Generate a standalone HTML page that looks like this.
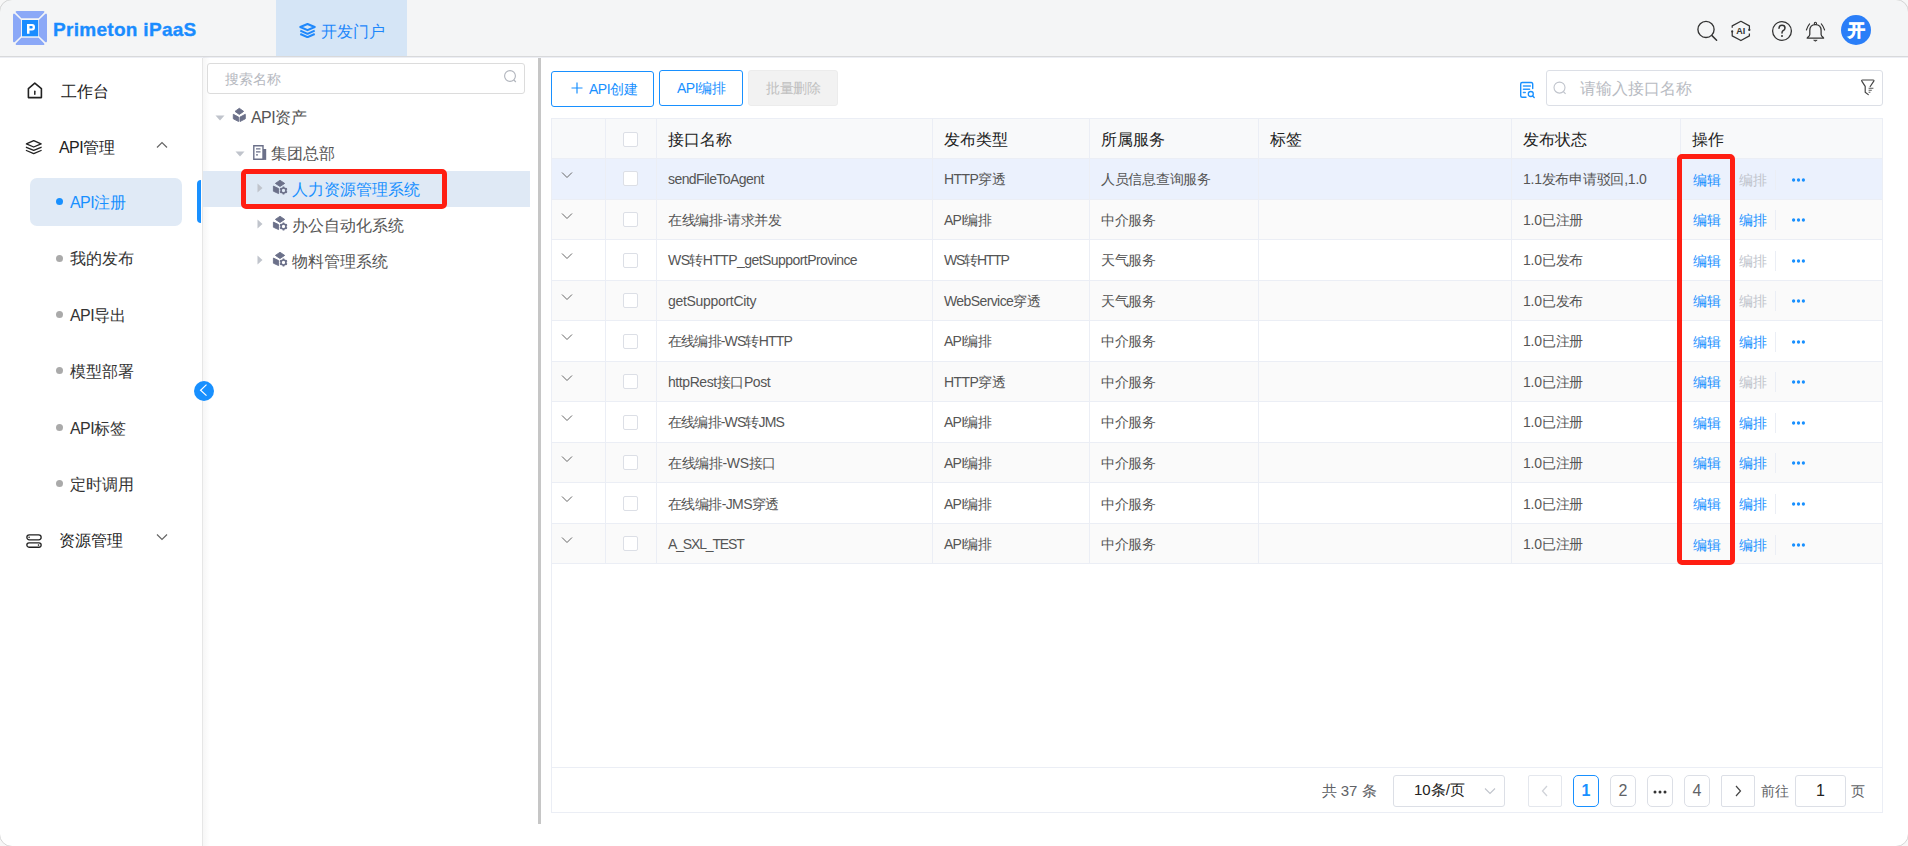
<!DOCTYPE html>
<html><head><meta charset="utf-8">
<style>
*{box-sizing:border-box;margin:0;padding:0}
html,body{width:1908px;height:846px;overflow:hidden;background:#fff;font-family:"Liberation Sans",sans-serif;color:#333}
.abs{position:absolute}
#hdr{position:absolute;left:0;top:0;width:1908px;height:57px;background:#f4f5f6;border-bottom:1px solid #d8d9db}
#logo{left:13px;top:11px;width:34px;height:34px}
#brand{left:53px;top:19px;font-size:19px;line-height:22px;font-weight:bold;color:#1a8cff;white-space:nowrap;letter-spacing:0.3px;-webkit-text-stroke:0.35px #1a8cff}
#tab{left:276px;top:0;width:131px;height:56px;background:#d5e5f6}
#tabtxt{left:321px;top:21.5px;font-size:16px;color:#1f88fb;white-space:nowrap}
#side{left:0;top:57px;width:203px;height:789px;background:#fff;border-right:1px solid #e6e6e6}
.mi{position:absolute;font-size:16px;color:#222;white-space:nowrap}
.si{position:absolute;font-size:16px;color:#333;white-space:nowrap}
.dot{position:absolute;width:7px;height:7px;border-radius:50%;background:#aaa}
#tree{left:203px;top:57px;width:336px;height:789px;background:#fff}
.tn{position:absolute;font-size:16px;color:#555;white-space:nowrap}
#main{left:540px;top:57px;width:1368px;height:789px;background:#fff}
.btn{position:absolute;height:36px;border:1px solid #1890ff;border-radius:3px;color:#1890ff;font-size:14px;letter-spacing:-0.5px;text-align:center;line-height:34px;background:#fff;white-space:nowrap}
table{border-collapse:collapse}
.row{position:absolute;left:551px;width:1332px}
.cell{position:absolute;top:0;height:100%;font-size:14px;color:#555;white-space:nowrap;display:flex;align-items:center;padding-left:12px}
.vl{position:absolute;width:1px;background:#ebeef5}
.hl{position:absolute;height:1px;background:#ebeef5}
.cb{position:absolute;width:15px;height:15px;border:1px solid #dcdfe6;border-radius:2px;background:#fff}
.op{position:absolute;font-size:14px;color:#1890ff;white-space:nowrap}
.opd{color:#c0c4cc}
.pg{position:absolute;top:775px;height:32px;border:1px solid #dcdfe6;border-radius:5px;background:#fff;font-size:16px;color:#606266;text-align:center;line-height:30px}
</style></head><body>
<div id="hdr"></div>
<svg class="abs" id="logo" viewBox="0 0 34 34">
  <g fill="#8ba8f7" stroke="#8ba8f7" stroke-width="1.3" stroke-linejoin="round">
    <path d="M3.9 0.65 H30.2 Q31.2 0.65 30.5 1.4 L25.4 6.6 H8.6 L3.5 1.4 Q2.9 0.65 3.9 0.65Z"/>
    <path d="M3.9 33.35 H30.2 Q31.2 33.35 30.5 32.6 L25.4 27.4 H8.6 L3.5 32.6 Q2.9 33.35 3.9 33.35Z"/>
    <path d="M0.65 3.9 V30.1 Q0.65 31.1 1.4 30.4 L7.4 24.8 V9.2 L1.4 3.5 Q0.65 2.9 0.65 3.9Z"/>
    <path d="M33.35 3.9 V30.1 Q33.35 31.1 32.6 30.4 L26.6 24.8 V9.2 L32.6 3.5 Q33.35 2.9 33.35 3.9Z"/>
  </g>
  <rect x="9" y="9" width="16.2" height="16.3" fill="#1a8cff"/>
  <path fill-rule="evenodd" fill="#fff" d="M14 13 H19.2 Q22 13 22 16.2 Q22 19.5 19.2 19.5 H16.5 V22.7 H14Z M16.5 14.9 H18.8 Q19.7 14.9 19.7 16.2 Q19.7 17.6 18.8 17.6 H16.5Z"/>
</svg>
<div class="abs" id="brand">Primeton iPaaS</div>
<div class="abs" id="tab"></div>
<svg class="abs" style="left:299px;top:22.5px" width="17" height="15" viewBox="0 0 17 15">
  <path d="M1.3 4 L8.5 1 L15.7 4 L8.5 7.2Z" fill="none" stroke="#1f88fb" stroke-width="2" stroke-linejoin="round"/>
  <path d="M1.3 7.6 L8.5 10.8 L15.7 7.6" fill="none" stroke="#1f88fb" stroke-width="2" stroke-linejoin="round"/>
  <path d="M1.3 11 L8.5 14.2 L15.7 11" fill="none" stroke="#1f88fb" stroke-width="2" stroke-linejoin="round"/>
</svg>
<div class="abs" id="tabtxt">开发门户</div>

<!-- header icons -->
<svg class="abs" style="left:1694px;top:17px" width="26" height="26" viewBox="0 0 26 26">
  <circle cx="12" cy="12.4" r="8.1" fill="none" stroke="#333" stroke-width="1.35"/>
  <path d="M18 18.6 L22.6 23.2" stroke="#333" stroke-width="1.5" stroke-linecap="round"/>
</svg>
<svg class="abs" style="left:1729px;top:19px" width="24" height="24" viewBox="0 0 24 24">
  <path d="M3.2 8.7 V6.9 L11.9 2.3 L20.4 6.9 V10.8 M20.4 14.4 V16.9 L11.9 21.5 L3.2 16.9 V12.4" fill="none" stroke="#333" stroke-width="1.25" stroke-linejoin="round"/>
  <circle cx="20.3" cy="10.9" r="1.15" fill="#333"/>
  <circle cx="3.2" cy="12.4" r="1.1" fill="#333"/>
  <text x="11.7" y="14.7" font-size="9" font-weight="bold" fill="#333" text-anchor="middle" style="font-family:'Liberation Sans'">AI</text>
</svg>
<svg class="abs" style="left:1770px;top:19px" width="24" height="24" viewBox="0 0 24 24">
  <circle cx="12" cy="12" r="9.4" fill="none" stroke="#333" stroke-width="1.3"/>
  <path d="M9 9.3 Q9 6.3 12 6.3 Q15 6.3 15 9 Q15 10.8 13 11.7 Q12 12.3 12 14" fill="none" stroke="#333" stroke-width="1.5" stroke-linecap="round"/>
  <circle cx="12" cy="16.9" r="1" fill="#333"/>
</svg>
<svg class="abs" style="left:1804px;top:20px" width="24" height="24" viewBox="0 0 24 24">
  <path d="M5.8 14.4 V10.6 Q5.8 4.7 11.4 4.7 Q17.1 4.7 17.1 10.6 V14.4 Q17.1 15.9 19.3 17.6 Q20 18.2 19.2 18.2 H3.6 Q2.8 18.2 3.5 17.6 Q5.8 15.9 5.8 14.4Z" fill="none" stroke="#333" stroke-width="1.25" stroke-linejoin="round"/>
  <circle cx="11.4" cy="3.4" r="1.1" fill="none" stroke="#333" stroke-width="1.1"/>
  <path d="M9.6 20.2 Q11.4 22.2 13.2 20.2Z" fill="#333" stroke="#333" stroke-width="0.6" stroke-linejoin="round"/>
  <path d="M5.6 3.8 Q3.4 6.4 2.4 10 M17.3 3.8 Q19.5 6.4 20.6 10" fill="none" stroke="#333" stroke-width="1.1" stroke-linecap="round"/>
</svg>
<div class="abs" style="left:1841px;top:15px;width:30px;height:30px;border-radius:50%;background:#2a7ef8"></div><div class="abs" style="left:1841px;top:16px;width:30px;height:30px;color:#fff;font-size:17px;font-weight:bold;-webkit-text-stroke:0.7px #fff;text-align:center;line-height:30px">开</div>

<!-- sidebar -->
<div class="abs" id="side"></div>
<div class="abs" style="left:0;top:57px;width:1908px;height:1px;background:#eceef4"></div>
<div class="abs" style="left:203px;top:57px;width:7px;height:789px;background:linear-gradient(to right,rgba(0,0,0,0.035),rgba(0,0,0,0))"></div>
<svg class="abs" style="left:26px;top:82px" width="18" height="18" viewBox="0 0 18 18">
  <path d="M2.4 6.6 L8.8 1.2 L15.4 6.6 V15.6 H2.4Z" fill="none" stroke="#222" stroke-width="1.6" stroke-linejoin="round"/>
  <path d="M8.8 9.2 V12.2" stroke="#222" stroke-width="1.5" stroke-linecap="round"/>
</svg>
<div class="mi" style="left:61px;top:82px">工作台</div>
<svg class="abs" style="left:25px;top:138px" width="18" height="18" viewBox="0 0 18 18">
  <path d="M1.4 5.9 L8.7 2.6 L16.1 5.9 L8.7 9Z" fill="none" stroke="#222" stroke-width="1.35" stroke-linejoin="round"/>
  <path d="M1.4 9.3 L8.7 12.4 L16.1 9.3 M1.4 12.5 L8.7 15.6 L16.1 12.5" fill="none" stroke="#222" stroke-width="1.35" stroke-linejoin="round" stroke-linecap="round"/>
</svg>
<div class="mi" style="left:59px;top:137.5px"><span style="letter-spacing:-0.6px">API</span>管理</div>
<svg class="abs" style="left:156px;top:141px" width="12" height="8" viewBox="0 0 12 8"><path d="M1 6.5 L6 1.5 L11 6.5" fill="none" stroke="#666" stroke-width="1.2"/></svg>
<div class="abs" style="left:30px;top:178px;width:152px;height:48px;border-radius:7px;background:#e0eaf6"></div>
<div class="dot" style="left:55.8px;top:198.3px;background:#1890ff"></div>
<div class="si" style="left:70px;top:193.0px;color:#1890ff"><span style="letter-spacing:-0.6px">API</span>注册</div>
<div class="abs" style="left:197px;top:180px;width:4px;height:43px;background:#1890ff;border-radius:4px 0 0 4px"></div>
<div class="dot" style="left:55.8px;top:254.6px"></div>
<div class="si" style="left:70px;top:249.4px">我的发布</div>
<div class="dot" style="left:55.8px;top:310.9px"></div>
<div class="si" style="left:70px;top:305.8px"><span style="letter-spacing:-0.6px">API</span>导出</div>
<div class="dot" style="left:55.8px;top:367.2px"></div>
<div class="si" style="left:70px;top:362.2px">模型部署</div>
<div class="dot" style="left:55.8px;top:423.5px"></div>
<div class="si" style="left:70px;top:418.6px"><span style="letter-spacing:-0.6px">API</span>标签</div>
<div class="dot" style="left:55.8px;top:479.8px"></div>
<div class="si" style="left:70px;top:475.0px">定时调用</div>
<svg class="abs" style="left:25px;top:532px" width="18" height="18" viewBox="0 0 18 18">
  <rect x="1.85" y="2.85" width="14.3" height="5" rx="2.5" fill="none" stroke="#222" stroke-width="1.3"/>
  <rect x="1.85" y="10.95" width="14.3" height="4.3" rx="2.15" fill="none" stroke="#222" stroke-width="1.3"/>
  <circle cx="4.1" cy="5.35" r="0.8" fill="#222"/><circle cx="13.5" cy="13.1" r="0.8" fill="#222"/>
</svg>
<div class="mi" style="left:58.5px;top:531px">资源管理</div>
<svg class="abs" style="left:156px;top:533px" width="12" height="8" viewBox="0 0 12 8"><path d="M1 1.5 L6 6.5 L11 1.5" fill="none" stroke="#666" stroke-width="1.2"/></svg>
<div class="abs" style="left:194px;top:381px;width:20px;height:20px;border-radius:50%;background:#1890ff"></div>
<svg class="abs" style="left:194px;top:381px" width="20" height="20" viewBox="0 0 20 20"><path d="M12.5 3.6 L6.6 9.2 L12.5 14.6" fill="none" stroke="#fff" stroke-width="1.2"/></svg>

<!-- tree -->
<div class="abs" style="left:207px;top:63px;width:318px;height:31px;border:1px solid #dcdcdc;border-radius:3px;background:#fff"></div>
<div class="abs" style="left:225px;top:71px;font-size:14px;color:#b6b9bf">搜索名称</div>
<svg class="abs" style="left:502px;top:68px" width="16" height="16" viewBox="0 0 16 16"><circle cx="8" cy="8" r="5.4" fill="none" stroke="#b0b4bc" stroke-width="1.1"/><path d="M11.8 11.8 L13.8 14" stroke="#b0b4bc" stroke-width="1.2"/></svg>
<div class="abs" style="left:203px;top:171px;width:327px;height:36px;background:#dfe9f5"></div>
<svg class="abs" style="left:215px;top:115px" width="10" height="6" viewBox="0 0 10 6"><path d="M0.5 0.5 H9.5 L5 5.5Z" fill="#c0c4cc"/></svg>
<svg class="abs" style="left:232px;top:107px" width="16" height="16" viewBox="0 0 16 16"><g fill="#6b7089" stroke="#6b7089" stroke-width="0.9" stroke-linejoin="round"><path d="M3 4.4 L7.3 1.3 L11.7 4.4 L7.3 7.4Z"/><path d="M1.3 7.3 L6.6 10.1 V14.5 L1.3 11.8Z"/><path d="M8 10.1 L13.3 7.3 V11.8 L8 14.5Z"/></g></svg>
<div class="tn" style="left:251px;top:108px"><span style="letter-spacing:-0.6px">API</span>资产</div>
<svg class="abs" style="left:235px;top:151px" width="10" height="6" viewBox="0 0 10 6"><path d="M0.5 0.5 H9.5 L5 5.5Z" fill="#c0c4cc"/></svg>
<svg class="abs" style="left:253px;top:145px" width="14" height="15" viewBox="0 0 14 15"><path d="M0.8 0.8 H10 V14.2 H0.8Z" fill="none" stroke="#6b7089" stroke-width="1.4"/><rect x="10" y="4" width="3.2" height="10.9" fill="#6b7089"/><path d="M3 3.8 H7.5 M3 6.8 H7.5 M3 9.8 H5" stroke="#6b7089" stroke-width="1.2"/></svg>
<div class="tn" style="left:271px;top:144px">集团总部</div>
<svg class="abs" style="left:257px;top:183px" width="6" height="10" viewBox="0 0 6 10"><path d="M0.5 0.5 V9.5 L5.5 5Z" fill="#c0c4cc"/></svg>
<svg class="abs" style="left:272px;top:179px" width="17" height="17" viewBox="0 0 17 17"><g fill="#6b7089" stroke="#6b7089" stroke-width="0.9" stroke-linejoin="round"><path d="M3.4 4.4 L8 1.3 L12.7 4.4 L8 7.5Z"/><path d="M1.4 7.1 L6.6 9.6 V14.6 L1.4 12.2Z"/></g><path d="M11.50 13.70 L11.50 15.50 M9.59 12.60 L8.04 13.50 M9.59 10.40 L8.04 9.50 M11.50 9.30 L11.50 7.50 M13.41 10.40 L14.96 9.50 M13.41 12.60 L14.96 13.50 " stroke="#6b7089" stroke-width="1.7"/><circle cx="11.5" cy="11.5" r="2.45" fill="none" stroke="#6b7089" stroke-width="1.6"/></svg>
<div class="tn" style="left:292px;top:179.5px;color:#1890ff">人力资源管理系统</div>
<svg class="abs" style="left:257px;top:219px" width="6" height="10" viewBox="0 0 6 10"><path d="M0.5 0.5 V9.5 L5.5 5Z" fill="#c0c4cc"/></svg>
<svg class="abs" style="left:272px;top:215px" width="17" height="17" viewBox="0 0 17 17"><g fill="#6b7089" stroke="#6b7089" stroke-width="0.9" stroke-linejoin="round"><path d="M3.4 4.4 L8 1.3 L12.7 4.4 L8 7.5Z"/><path d="M1.4 7.1 L6.6 9.6 V14.6 L1.4 12.2Z"/></g><path d="M11.50 13.70 L11.50 15.50 M9.59 12.60 L8.04 13.50 M9.59 10.40 L8.04 9.50 M11.50 9.30 L11.50 7.50 M13.41 10.40 L14.96 9.50 M13.41 12.60 L14.96 13.50 " stroke="#6b7089" stroke-width="1.7"/><circle cx="11.5" cy="11.5" r="2.45" fill="none" stroke="#6b7089" stroke-width="1.6"/></svg>
<div class="tn" style="left:292px;top:215.5px;color:#555">办公自动化系统</div>
<svg class="abs" style="left:257px;top:255px" width="6" height="10" viewBox="0 0 6 10"><path d="M0.5 0.5 V9.5 L5.5 5Z" fill="#c0c4cc"/></svg>
<svg class="abs" style="left:272px;top:251px" width="17" height="17" viewBox="0 0 17 17"><g fill="#6b7089" stroke="#6b7089" stroke-width="0.9" stroke-linejoin="round"><path d="M3.4 4.4 L8 1.3 L12.7 4.4 L8 7.5Z"/><path d="M1.4 7.1 L6.6 9.6 V14.6 L1.4 12.2Z"/></g><path d="M11.50 13.70 L11.50 15.50 M9.59 12.60 L8.04 13.50 M9.59 10.40 L8.04 9.50 M11.50 9.30 L11.50 7.50 M13.41 10.40 L14.96 9.50 M13.41 12.60 L14.96 13.50 " stroke="#6b7089" stroke-width="1.7"/><circle cx="11.5" cy="11.5" r="2.45" fill="none" stroke="#6b7089" stroke-width="1.6"/></svg>
<div class="tn" style="left:292px;top:251.5px;color:#555">物料管理系统</div>
<div class="abs" style="left:538px;top:58px;width:3px;height:766px;background:#c6c6c6"></div>

<!-- main -->
<div class="btn" style="left:551px;top:71px;width:103px;text-align:left;padding-left:37px">API创建</div>
<svg class="abs" style="left:570.5px;top:82px" width="12" height="12" viewBox="0 0 12 12"><path d="M6 0.5 V11.5 M0.5 6 H11.5" stroke="#1890ff" stroke-width="1.2"/></svg>
<div class="btn" style="left:659px;top:70px;width:84px">API编排</div>
<div class="btn" style="left:748px;top:70px;width:90px;background:#f2f2f2;border-color:#ececec;color:#c0c0c0">批量删除</div>

<div class="abs" style="left:551px;top:118px;width:1332px;height:695px;border:1px solid #ebeef5"></div>
<div class="abs" style="left:552px;top:119px;width:1330px;height:39px;background:#f8f9fa"></div>
<div class="abs" style="left:552px;top:158.0px;width:1330px;height:40.53px;background:#ebf1fd"></div>
<div class="abs" style="left:552px;top:198.53px;width:1330px;height:40.53px;background:#fafafa"></div>
<div class="abs" style="left:552px;top:239.06px;width:1330px;height:40.53px;background:#fff"></div>
<div class="abs" style="left:552px;top:279.59000000000003px;width:1330px;height:40.53px;background:#fafafa"></div>
<div class="abs" style="left:552px;top:320.12px;width:1330px;height:40.53px;background:#fff"></div>
<div class="abs" style="left:552px;top:360.65px;width:1330px;height:40.53px;background:#fafafa"></div>
<div class="abs" style="left:552px;top:401.18px;width:1330px;height:40.53px;background:#fff"></div>
<div class="abs" style="left:552px;top:441.71000000000004px;width:1330px;height:40.53px;background:#fafafa"></div>
<div class="abs" style="left:552px;top:482.24px;width:1330px;height:40.53px;background:#fff"></div>
<div class="abs" style="left:552px;top:522.77px;width:1330px;height:40.53px;background:#fafafa"></div>
<div class="hl" style="left:551px;top:158px;width:1332px"></div>
<div class="hl" style="left:551px;top:198.53px;width:1332px"></div>
<div class="hl" style="left:551px;top:239.06px;width:1332px"></div>
<div class="hl" style="left:551px;top:279.59000000000003px;width:1332px"></div>
<div class="hl" style="left:551px;top:320.12px;width:1332px"></div>
<div class="hl" style="left:551px;top:360.65px;width:1332px"></div>
<div class="hl" style="left:551px;top:401.18px;width:1332px"></div>
<div class="hl" style="left:551px;top:441.71000000000004px;width:1332px"></div>
<div class="hl" style="left:551px;top:482.24px;width:1332px"></div>
<div class="hl" style="left:551px;top:522.77px;width:1332px"></div>
<div class="hl" style="left:551px;top:563.3px;width:1332px"></div>
<div class="hl" style="left:551px;top:767px;width:1332px"></div>
<div class="vl" style="left:605px;top:118px;height:445.29999999999995px"></div>
<div class="vl" style="left:656px;top:118px;height:445.29999999999995px"></div>
<div class="vl" style="left:932px;top:118px;height:445.29999999999995px"></div>
<div class="vl" style="left:1089px;top:118px;height:445.29999999999995px"></div>
<div class="vl" style="left:1258px;top:118px;height:445.29999999999995px"></div>
<div class="vl" style="left:1511px;top:118px;height:445.29999999999995px"></div>
<div class="vl" style="left:1680px;top:118px;height:445.29999999999995px"></div>
<div class="abs" style="left:668px;top:129.5px;font-size:16px;color:#222;white-space:nowrap">接口名称</div>
<div class="abs" style="left:944px;top:129.5px;font-size:16px;color:#222;white-space:nowrap">发布类型</div>
<div class="abs" style="left:1101px;top:129.5px;font-size:16px;color:#222;white-space:nowrap">所属服务</div>
<div class="abs" style="left:1270px;top:129.5px;font-size:16px;color:#222;white-space:nowrap">标签</div>
<div class="abs" style="left:1523px;top:129.5px;font-size:16px;color:#222;white-space:nowrap">发布状态</div>
<div class="abs" style="left:1692px;top:129.5px;font-size:16px;color:#222;white-space:nowrap">操作</div>
<div class="cb" style="left:623px;top:132px"></div>
<svg class="abs" style="left:561px;top:171.0px" width="12" height="8" viewBox="0 0 12 8"><path d="M1 1.5 L6 6.5 L11 1.5" fill="none" stroke="#666" stroke-width="1"/></svg>
<div class="cb" style="left:623px;top:171.46499999999997px"></div>
<div class="abs" style="left:668px;top:169.265px;font-size:14px;line-height:20px;color:#555;white-space:nowrap;letter-spacing:-0.57px">sendFileToAgent</div>
<div class="abs" style="left:944px;top:169.265px;font-size:14px;line-height:20px;color:#555;white-space:nowrap;letter-spacing:-0.6px">HTTP穿透</div>
<div class="abs" style="left:1101px;top:169.265px;font-size:14px;line-height:20px;color:#555;white-space:nowrap;letter-spacing:-0.29px">人员信息查询服务</div>
<div class="abs" style="left:1523px;top:169.265px;font-size:14px;line-height:20px;color:#555;white-space:nowrap;letter-spacing:-0.25px">1.1发布申请驳回,1.0</div>
<div class="op" style="left:1693px;top:169.765px;line-height:20px">编辑</div>
<div class="op opd" style="left:1739px;top:169.765px;line-height:20px">编排</div>
<div class="abs" style="left:1775px;top:169.765px;width:1px;height:20px;background:#ebeef5"></div>
<svg class="abs" style="left:1791px;top:177.765px" width="15" height="4" viewBox="0 0 15 4"><circle cx="2.6" cy="2" r="1.65" fill="#1890ff"/><circle cx="7.5" cy="2" r="1.65" fill="#1890ff"/><circle cx="12.4" cy="2" r="1.65" fill="#1890ff"/></svg>
<svg class="abs" style="left:561px;top:211.53px" width="12" height="8" viewBox="0 0 12 8"><path d="M1 1.5 L6 6.5 L11 1.5" fill="none" stroke="#666" stroke-width="1"/></svg>
<div class="cb" style="left:623px;top:211.995px"></div>
<div class="abs" style="left:668px;top:209.79500000000002px;font-size:14px;line-height:20px;color:#555;white-space:nowrap;letter-spacing:-0.33px">在线编排-请求并发</div>
<div class="abs" style="left:944px;top:209.79500000000002px;font-size:14px;line-height:20px;color:#555;white-space:nowrap;letter-spacing:-0.75px">API编排</div>
<div class="abs" style="left:1101px;top:209.79500000000002px;font-size:14px;line-height:20px;color:#555;white-space:nowrap;letter-spacing:-0.33px">中介服务</div>
<div class="abs" style="left:1523px;top:209.79500000000002px;font-size:14px;line-height:20px;color:#555;white-space:nowrap;letter-spacing:-0.2px">1.0已注册</div>
<div class="op" style="left:1693px;top:210.29500000000002px;line-height:20px">编辑</div>
<div class="op" style="left:1739px;top:210.29500000000002px;line-height:20px">编排</div>
<div class="abs" style="left:1775px;top:210.29500000000002px;width:1px;height:20px;background:#ebeef5"></div>
<svg class="abs" style="left:1791px;top:218.29500000000002px" width="15" height="4" viewBox="0 0 15 4"><circle cx="2.6" cy="2" r="1.65" fill="#1890ff"/><circle cx="7.5" cy="2" r="1.65" fill="#1890ff"/><circle cx="12.4" cy="2" r="1.65" fill="#1890ff"/></svg>
<svg class="abs" style="left:561px;top:252.06px" width="12" height="8" viewBox="0 0 12 8"><path d="M1 1.5 L6 6.5 L11 1.5" fill="none" stroke="#666" stroke-width="1"/></svg>
<div class="cb" style="left:623px;top:252.52499999999998px"></div>
<div class="abs" style="left:668px;top:250.325px;font-size:14px;line-height:20px;color:#555;white-space:nowrap;letter-spacing:-0.57px">WS转HTTP_getSupportProvince</div>
<div class="abs" style="left:944px;top:250.325px;font-size:14px;line-height:20px;color:#555;white-space:nowrap;letter-spacing:-1.2px">WS转HTTP</div>
<div class="abs" style="left:1101px;top:250.325px;font-size:14px;line-height:20px;color:#555;white-space:nowrap;letter-spacing:-0.33px">天气服务</div>
<div class="abs" style="left:1523px;top:250.325px;font-size:14px;line-height:20px;color:#555;white-space:nowrap;letter-spacing:-0.2px">1.0已发布</div>
<div class="op" style="left:1693px;top:250.825px;line-height:20px">编辑</div>
<div class="op opd" style="left:1739px;top:250.825px;line-height:20px">编排</div>
<div class="abs" style="left:1775px;top:250.825px;width:1px;height:20px;background:#ebeef5"></div>
<svg class="abs" style="left:1791px;top:258.825px" width="15" height="4" viewBox="0 0 15 4"><circle cx="2.6" cy="2" r="1.65" fill="#1890ff"/><circle cx="7.5" cy="2" r="1.65" fill="#1890ff"/><circle cx="12.4" cy="2" r="1.65" fill="#1890ff"/></svg>
<svg class="abs" style="left:561px;top:292.59000000000003px" width="12" height="8" viewBox="0 0 12 8"><path d="M1 1.5 L6 6.5 L11 1.5" fill="none" stroke="#666" stroke-width="1"/></svg>
<div class="cb" style="left:623px;top:293.055px"></div>
<div class="abs" style="left:668px;top:290.855px;font-size:14px;line-height:20px;color:#555;white-space:nowrap;letter-spacing:-0.31px">getSupportCity</div>
<div class="abs" style="left:944px;top:290.855px;font-size:14px;line-height:20px;color:#555;white-space:nowrap;letter-spacing:-0.6px">WebService穿透</div>
<div class="abs" style="left:1101px;top:290.855px;font-size:14px;line-height:20px;color:#555;white-space:nowrap;letter-spacing:-0.33px">天气服务</div>
<div class="abs" style="left:1523px;top:290.855px;font-size:14px;line-height:20px;color:#555;white-space:nowrap;letter-spacing:-0.2px">1.0已发布</div>
<div class="op" style="left:1693px;top:291.355px;line-height:20px">编辑</div>
<div class="op opd" style="left:1739px;top:291.355px;line-height:20px">编排</div>
<div class="abs" style="left:1775px;top:291.355px;width:1px;height:20px;background:#ebeef5"></div>
<svg class="abs" style="left:1791px;top:299.355px" width="15" height="4" viewBox="0 0 15 4"><circle cx="2.6" cy="2" r="1.65" fill="#1890ff"/><circle cx="7.5" cy="2" r="1.65" fill="#1890ff"/><circle cx="12.4" cy="2" r="1.65" fill="#1890ff"/></svg>
<svg class="abs" style="left:561px;top:333.12px" width="12" height="8" viewBox="0 0 12 8"><path d="M1 1.5 L6 6.5 L11 1.5" fill="none" stroke="#666" stroke-width="1"/></svg>
<div class="cb" style="left:623px;top:333.585px"></div>
<div class="abs" style="left:668px;top:331.385px;font-size:14px;line-height:20px;color:#555;white-space:nowrap;letter-spacing:-0.82px">在线编排-WS转HTTP</div>
<div class="abs" style="left:944px;top:331.385px;font-size:14px;line-height:20px;color:#555;white-space:nowrap;letter-spacing:-0.75px">API编排</div>
<div class="abs" style="left:1101px;top:331.385px;font-size:14px;line-height:20px;color:#555;white-space:nowrap;letter-spacing:-0.33px">中介服务</div>
<div class="abs" style="left:1523px;top:331.385px;font-size:14px;line-height:20px;color:#555;white-space:nowrap;letter-spacing:-0.2px">1.0已注册</div>
<div class="op" style="left:1693px;top:331.885px;line-height:20px">编辑</div>
<div class="op" style="left:1739px;top:331.885px;line-height:20px">编排</div>
<div class="abs" style="left:1775px;top:331.885px;width:1px;height:20px;background:#ebeef5"></div>
<svg class="abs" style="left:1791px;top:339.885px" width="15" height="4" viewBox="0 0 15 4"><circle cx="2.6" cy="2" r="1.65" fill="#1890ff"/><circle cx="7.5" cy="2" r="1.65" fill="#1890ff"/><circle cx="12.4" cy="2" r="1.65" fill="#1890ff"/></svg>
<svg class="abs" style="left:561px;top:373.65px" width="12" height="8" viewBox="0 0 12 8"><path d="M1 1.5 L6 6.5 L11 1.5" fill="none" stroke="#666" stroke-width="1"/></svg>
<div class="cb" style="left:623px;top:374.11499999999995px"></div>
<div class="abs" style="left:668px;top:371.91499999999996px;font-size:14px;line-height:20px;color:#555;white-space:nowrap;letter-spacing:-0.42px">httpRest接口Post</div>
<div class="abs" style="left:944px;top:371.91499999999996px;font-size:14px;line-height:20px;color:#555;white-space:nowrap;letter-spacing:-0.6px">HTTP穿透</div>
<div class="abs" style="left:1101px;top:371.91499999999996px;font-size:14px;line-height:20px;color:#555;white-space:nowrap;letter-spacing:-0.33px">中介服务</div>
<div class="abs" style="left:1523px;top:371.91499999999996px;font-size:14px;line-height:20px;color:#555;white-space:nowrap;letter-spacing:-0.2px">1.0已注册</div>
<div class="op" style="left:1693px;top:372.41499999999996px;line-height:20px">编辑</div>
<div class="op opd" style="left:1739px;top:372.41499999999996px;line-height:20px">编排</div>
<div class="abs" style="left:1775px;top:372.41499999999996px;width:1px;height:20px;background:#ebeef5"></div>
<svg class="abs" style="left:1791px;top:380.41499999999996px" width="15" height="4" viewBox="0 0 15 4"><circle cx="2.6" cy="2" r="1.65" fill="#1890ff"/><circle cx="7.5" cy="2" r="1.65" fill="#1890ff"/><circle cx="12.4" cy="2" r="1.65" fill="#1890ff"/></svg>
<svg class="abs" style="left:561px;top:414.18px" width="12" height="8" viewBox="0 0 12 8"><path d="M1 1.5 L6 6.5 L11 1.5" fill="none" stroke="#666" stroke-width="1"/></svg>
<div class="cb" style="left:623px;top:414.645px"></div>
<div class="abs" style="left:668px;top:412.445px;font-size:14px;line-height:20px;color:#555;white-space:nowrap;letter-spacing:-0.83px">在线编排-WS转JMS</div>
<div class="abs" style="left:944px;top:412.445px;font-size:14px;line-height:20px;color:#555;white-space:nowrap;letter-spacing:-0.75px">API编排</div>
<div class="abs" style="left:1101px;top:412.445px;font-size:14px;line-height:20px;color:#555;white-space:nowrap;letter-spacing:-0.33px">中介服务</div>
<div class="abs" style="left:1523px;top:412.445px;font-size:14px;line-height:20px;color:#555;white-space:nowrap;letter-spacing:-0.2px">1.0已注册</div>
<div class="op" style="left:1693px;top:412.945px;line-height:20px">编辑</div>
<div class="op" style="left:1739px;top:412.945px;line-height:20px">编排</div>
<div class="abs" style="left:1775px;top:412.945px;width:1px;height:20px;background:#ebeef5"></div>
<svg class="abs" style="left:1791px;top:420.945px" width="15" height="4" viewBox="0 0 15 4"><circle cx="2.6" cy="2" r="1.65" fill="#1890ff"/><circle cx="7.5" cy="2" r="1.65" fill="#1890ff"/><circle cx="12.4" cy="2" r="1.65" fill="#1890ff"/></svg>
<svg class="abs" style="left:561px;top:454.71000000000004px" width="12" height="8" viewBox="0 0 12 8"><path d="M1 1.5 L6 6.5 L11 1.5" fill="none" stroke="#666" stroke-width="1"/></svg>
<div class="cb" style="left:623px;top:455.175px"></div>
<div class="abs" style="left:668px;top:452.975px;font-size:14px;line-height:20px;color:#555;white-space:nowrap;letter-spacing:-0.375px">在线编排-WS接口</div>
<div class="abs" style="left:944px;top:452.975px;font-size:14px;line-height:20px;color:#555;white-space:nowrap;letter-spacing:-0.75px">API编排</div>
<div class="abs" style="left:1101px;top:452.975px;font-size:14px;line-height:20px;color:#555;white-space:nowrap;letter-spacing:-0.33px">中介服务</div>
<div class="abs" style="left:1523px;top:452.975px;font-size:14px;line-height:20px;color:#555;white-space:nowrap;letter-spacing:-0.2px">1.0已注册</div>
<div class="op" style="left:1693px;top:453.475px;line-height:20px">编辑</div>
<div class="op" style="left:1739px;top:453.475px;line-height:20px">编排</div>
<div class="abs" style="left:1775px;top:453.475px;width:1px;height:20px;background:#ebeef5"></div>
<svg class="abs" style="left:1791px;top:461.475px" width="15" height="4" viewBox="0 0 15 4"><circle cx="2.6" cy="2" r="1.65" fill="#1890ff"/><circle cx="7.5" cy="2" r="1.65" fill="#1890ff"/><circle cx="12.4" cy="2" r="1.65" fill="#1890ff"/></svg>
<svg class="abs" style="left:561px;top:495.24px" width="12" height="8" viewBox="0 0 12 8"><path d="M1 1.5 L6 6.5 L11 1.5" fill="none" stroke="#666" stroke-width="1"/></svg>
<div class="cb" style="left:623px;top:495.705px"></div>
<div class="abs" style="left:668px;top:493.505px;font-size:14px;line-height:20px;color:#555;white-space:nowrap;letter-spacing:-0.59px">在线编排-JMS穿透</div>
<div class="abs" style="left:944px;top:493.505px;font-size:14px;line-height:20px;color:#555;white-space:nowrap;letter-spacing:-0.75px">API编排</div>
<div class="abs" style="left:1101px;top:493.505px;font-size:14px;line-height:20px;color:#555;white-space:nowrap;letter-spacing:-0.33px">中介服务</div>
<div class="abs" style="left:1523px;top:493.505px;font-size:14px;line-height:20px;color:#555;white-space:nowrap;letter-spacing:-0.2px">1.0已注册</div>
<div class="op" style="left:1693px;top:494.005px;line-height:20px">编辑</div>
<div class="op" style="left:1739px;top:494.005px;line-height:20px">编排</div>
<div class="abs" style="left:1775px;top:494.005px;width:1px;height:20px;background:#ebeef5"></div>
<svg class="abs" style="left:1791px;top:502.005px" width="15" height="4" viewBox="0 0 15 4"><circle cx="2.6" cy="2" r="1.65" fill="#1890ff"/><circle cx="7.5" cy="2" r="1.65" fill="#1890ff"/><circle cx="12.4" cy="2" r="1.65" fill="#1890ff"/></svg>
<svg class="abs" style="left:561px;top:535.77px" width="12" height="8" viewBox="0 0 12 8"><path d="M1 1.5 L6 6.5 L11 1.5" fill="none" stroke="#666" stroke-width="1"/></svg>
<div class="cb" style="left:623px;top:536.235px"></div>
<div class="abs" style="left:668px;top:534.035px;font-size:14px;line-height:20px;color:#555;white-space:nowrap;letter-spacing:-1.15px">A_SXL_TEST</div>
<div class="abs" style="left:944px;top:534.035px;font-size:14px;line-height:20px;color:#555;white-space:nowrap;letter-spacing:-0.75px">API编排</div>
<div class="abs" style="left:1101px;top:534.035px;font-size:14px;line-height:20px;color:#555;white-space:nowrap;letter-spacing:-0.33px">中介服务</div>
<div class="abs" style="left:1523px;top:534.035px;font-size:14px;line-height:20px;color:#555;white-space:nowrap;letter-spacing:-0.2px">1.0已注册</div>
<div class="op" style="left:1693px;top:534.535px;line-height:20px">编辑</div>
<div class="op" style="left:1739px;top:534.535px;line-height:20px">编排</div>
<div class="abs" style="left:1775px;top:534.535px;width:1px;height:20px;background:#ebeef5"></div>
<svg class="abs" style="left:1791px;top:542.535px" width="15" height="4" viewBox="0 0 15 4"><circle cx="2.6" cy="2" r="1.65" fill="#1890ff"/><circle cx="7.5" cy="2" r="1.65" fill="#1890ff"/><circle cx="12.4" cy="2" r="1.65" fill="#1890ff"/></svg>
<div class="abs" style="left:240.5px;top:168.6px;width:206px;height:40.6px;border:5px solid #ff1e12;border-radius:5px"></div>
<div class="abs" style="left:1676.5px;top:153.6px;width:58.2px;height:411.5px;border:5px solid #ff1e12;border-radius:5px"></div>
<svg class="abs" style="left:1519px;top:81px" width="17" height="18" viewBox="0 0 17 18"><path d="M13.7 7.5 V3 Q13.7 1.5 12.2 1.5 H3.2 Q1.7 1.5 1.7 3 V14.7 Q1.7 16.2 3.2 16.2 H7" fill="none" stroke="#1890ff" stroke-width="1.4" stroke-linecap="round"/><path d="M4.4 5 H11.4 M4.4 8.3 H10.6 M4.4 11.5 H6.3" stroke="#1890ff" stroke-width="1.4" stroke-linecap="round" opacity="0.9"/><circle cx="11.8" cy="13" r="2.5" fill="none" stroke="#1890ff" stroke-width="1.3"/><path d="M13.6 14.9 L15.2 16.5" stroke="#1890ff" stroke-width="1.4" stroke-linecap="round"/></svg>
<div class="abs" style="left:1546px;top:70px;width:337px;height:36px;border:1px solid #dcdfe6;border-radius:3px;background:#fff"></div>
<svg class="abs" style="left:1552px;top:79.5px" width="16" height="16" viewBox="0 0 16 16"><circle cx="7.5" cy="7.6" r="5.5" fill="none" stroke="#c0c4cc" stroke-width="1.1"/><path d="M11.4 11.6 L13.6 13.8" stroke="#c0c4cc" stroke-width="1.2"/></svg>
<div class="abs" style="left:1580px;top:78px;font-size:16px;line-height:22px;color:#b8bbc2;white-space:nowrap">请输入接口名称</div>
<svg class="abs" style="left:1860px;top:79px" width="16" height="17" viewBox="0 0 16 17"><path d="M10.2 7.5 L13.8 2.1 Q14.3 1 13.1 1 H2.5 Q1.3 1 1.8 2.1 L5.2 7.3 V13.2 L8.3 15.6" fill="none" stroke="#444" stroke-width="1.2" stroke-linejoin="round" stroke-linecap="round"/><path d="M8.6 9.2 H13.4 M8.6 11.3 H11.8 M8.6 13.3 H10.4" stroke="#555" stroke-width="1.1"/></svg>
<div class="abs" style="left:1321.5px;top:781px;font-size:15px;line-height:20px;color:#606266;white-space:nowrap">共 37 条</div>
<div class="abs" style="left:1393px;top:775px;width:112px;height:32px;border:1px solid #dcdfe6;border-radius:3px;background:#fff"></div>
<div class="abs" style="left:1414px;top:780px;font-size:15px;line-height:20px;color:#222;white-space:nowrap">10条/页</div>
<svg class="abs" style="left:1484px;top:787px" width="12" height="8" viewBox="0 0 12 8"><path d="M1 1.5 L6 6.5 L11 1.5" fill="none" stroke="#c0c4cc" stroke-width="1.1"/></svg>
<div class="pg" style="left:1528px;width:34px;border-color:#e4e7ed;border-radius:2px"><svg width="10" height="12" viewBox="0 0 10 12" style="margin-top:9px"><path d="M7 1 L2.5 6 L7 11" fill="none" stroke="#d0d3d9" stroke-width="1.3"/></svg></div>
<div class="pg" style="left:1573px;width:26px;border-color:#1890ff;color:#1890ff;font-weight:bold">1</div>
<div class="pg" style="left:1610px;width:26px;">2</div>
<div class="pg" style="left:1647px;width:26px;"><svg width="14" height="4" viewBox="0 0 14 4" style="margin-bottom:2px"><circle cx="2" cy="2" r="1.5" fill="#333"/><circle cx="7" cy="2" r="1.5" fill="#333"/><circle cx="12" cy="2" r="1.5" fill="#333"/></svg></div>
<div class="pg" style="left:1684px;width:26px;">4</div>
<div class="pg" style="left:1721px;width:34px;border-radius:2px"><svg width="10" height="12" viewBox="0 0 10 12" style="margin-top:9px"><path d="M3 1 L7.5 6 L3 11" fill="none" stroke="#444" stroke-width="1.2"/></svg></div>
<div class="abs" style="left:1761px;top:781px;font-size:14px;line-height:20px;color:#606266;white-space:nowrap">前往</div>
<div class="abs" style="left:1795px;top:775px;width:51px;height:32px;border:1px solid #dcdfe6;border-radius:3px;background:#fff;text-align:center;font-size:16px;line-height:30px;color:#222">1</div>
<div class="abs" style="left:1851px;top:781px;font-size:14px;line-height:20px;color:#606266;white-space:nowrap">页</div>
<div class="abs" style="left:-1px;top:-1px;width:1910px;height:848px;border:1px solid #d4d4d4;border-radius:13px;box-shadow:0 0 0 30px #f7f7f7;pointer-events:none"></div>
</body></html>
